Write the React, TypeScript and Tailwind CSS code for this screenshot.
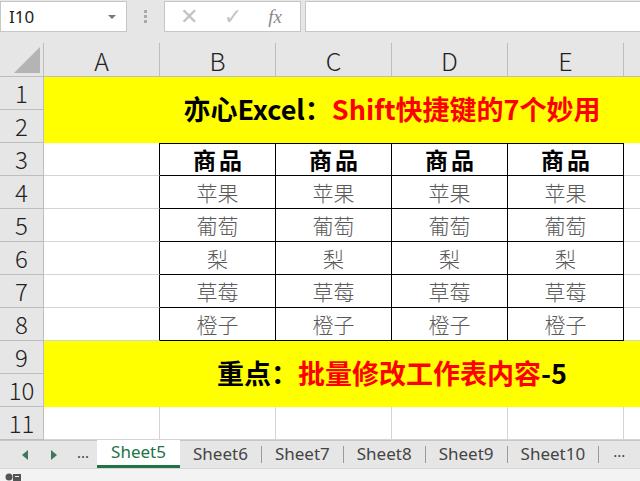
import React from "react";

const FONT = "font-['Noto_Sans_CJK_SC','Noto_Sans',sans-serif]";
const COLS = ["A", "B", "C", "D", "E", ""];
const FRUITS = ["苹果", "葡萄", "梨", "草莓", "橙子"];

function FormulaBar() {
  return (
    <div className="h-[43px] bg-[#e6e6e6] flex items-start pt-px">
      {/* 名称框 */}
      <div className="w-[127px] h-[31px] bg-white border border-[#c6c6c6] flex items-center justify-between pl-2 pr-2.5">
        <span className="text-[17px] text-[#222] font-['Noto_Sans',sans-serif]">I10</span>
        <span className="w-0 h-0 border-l-[4px] border-r-[4px] border-t-[4px] border-l-transparent border-r-transparent border-t-[#777]" />
      </div>
      <div className="w-[37px] h-[31px] flex flex-col items-center justify-center gap-[2px]">
        <span className="w-[3px] h-[3px] bg-[#aaa]" />
        <span className="w-[3px] h-[3px] bg-[#aaa]" />
        <span className="w-[3px] h-[3px] bg-[#aaa]" />
      </div>
      <div className="w-[137px] h-[31px] bg-white border border-[#c6c6c6] flex items-center">
        <span className="w-[48px] text-center text-[22px] leading-none text-[#c2c2c2] font-['DejaVu_Sans',sans-serif] font-light">✕</span>
        <span className="w-[40px] text-center text-[22px] leading-none text-[#c2c2c2] font-['DejaVu_Sans',sans-serif]">✓</span>
        <span className="w-[44px] text-center text-[19px] leading-none text-[#888] italic font-['Liberation_Serif',serif]">fx</span>
      </div>
      <div className="ml-[4px] flex-1 h-[31px] bg-white border border-[#c6c6c6] border-r-0" />
    </div>
  );
}

function ColumnHeader() {
  return (
    <div className="h-[34px] flex bg-[#e6e6e6] border-b border-[#bdbdbd]">
      <div className="w-[44px] shrink-0 border-r border-[#bdbdbd] flex items-end justify-end pr-[3px] pb-[3px]">
        <svg width="26" height="26">
          <polygon points="26,0 26,26 0,26" fill="#b4b4b4" />
        </svg>
      </div>
      {COLS.map((c, i) => (
        <div
          key={i}
          className="w-[116px] shrink-0 border-r border-[#bdbdbd] flex items-center justify-center text-[25px] font-light text-[#222] leading-none pt-[2px]"
        >
          {c}
        </div>
      ))}
    </div>
  );
}

function RowHead({ n, row }: { n: number; row: number }) {
  return (
    <div
      style={{ gridRowStart: row }}
      className="col-start-1 bg-[#e6e6e6] border-r border-b border-[#bdbdbd] flex items-center justify-center text-[24px] font-light text-[#222] leading-none"
    >
      {n}
    </div>
  );
}

export default function App() {
  const tabs = ["Sheet6", "Sheet7", "Sheet8", "Sheet9", "Sheet10"];

  return (
    <div className={`w-[640px] h-[481px] overflow-hidden bg-white flex flex-col ${FONT}`}>
      <FormulaBar />
      <ColumnHeader />

      <div className="grid grid-cols-[44px_repeat(6,116px)] grid-rows-[repeat(11,33px)] w-[740px]">
        {/* 1-2 行：标题 */}
        <RowHead n={1} row={1} />
        <RowHead n={2} row={2} />
        <div className="col-start-2 col-span-6 row-start-1 row-span-2 bg-[#ffff00] flex items-center justify-center pb-[4px] text-[27px] font-bold leading-none">
          <span className="text-black">亦心Excel：</span>
          <span className="text-[#ff0000]">Shift快捷键的7个妙用</span>
        </div>

        {/* 3-8 行：表格 */}
        {[3, 4, 5, 6, 7, 8].map((r, i) => (
          <React.Fragment key={r}>
            <RowHead n={r} row={r} />
            <div className="border-r border-r-black border-b border-b-[#d4d4d4]" style={{ gridRowStart: r }} />
            {[0, 1, 2, 3].map((c) => (
              <div
                key={c}
                style={{ gridRowStart: r }}
                className={
                  "border-r border-b border-black flex items-center justify-center leading-none " +
                  (i === 0
                    ? "border-t text-[23px] font-bold text-black tracking-[3px] pl-[3px]"
                    : "text-[21px] font-light text-[#5a5a5a]")
                }
              >
                {i === 0 ? "商品" : FRUITS[i - 1]}
              </div>
            ))}
            <div className="border-r border-b border-[#d4d4d4]" style={{ gridRowStart: r }} />
          </React.Fragment>
        ))}

        {/* 9-10 行：重点 */}
        <RowHead n={9} row={9} />
        <RowHead n={10} row={10} />
        <div className="col-start-2 col-span-6 row-start-9 row-span-2 bg-[#ffff00] flex items-center justify-center pb-[4px] text-[27px] font-bold leading-none">
          <span className="text-black">重点：</span>
          <span className="text-[#ff0000]">批量修改工作表内容</span>
          <span className="text-black">-5</span>
        </div>

        {/* 11 行 */}
        <RowHead n={11} row={11} />
        {[0, 1, 2, 3, 4, 5].map((c) => (
          <div key={c} className="row-start-11 border-r border-b border-[#d4d4d4]" />
        ))}
      </div>

      {/* 工作表标签 */}
      <div className="h-[28px] shrink-0 bg-[#e6e6e6] border-t border-[#c6c6c6] flex items-stretch font-['Noto_Sans',sans-serif]">
        <div className="w-[97px] flex items-center">
          <svg width="8" height="10" className="ml-[21px]" viewBox="0 0 8 10">
            <polygon points="7,0 7,10 1,5" fill="#3d7a5a" />
          </svg>
          <svg width="8" height="10" className="ml-[21px]" viewBox="0 0 8 10">
            <polygon points="1,0 1,10 7,5" fill="#3d7a5a" />
          </svg>
          <span className="ml-[19px] text-[15px] text-[#444] leading-none pb-[4px]">...</span>
        </div>
        <div className="w-[83px] bg-white border-b-[3px] border-[#217346] flex items-center justify-center text-[17px] text-[#217346] leading-none -mt-px pb-[2px]">
          Sheet5
        </div>
        {tabs.map((t) => (
          <div key={t} className="flex items-center">
            <span className="px-[13px] text-[17px] text-[#444] leading-none pb-[3px]">{t}</span>
            <span className="w-px h-[17px] bg-[#9a9a9a]" />
          </div>
        ))}
        <span className="ml-[14px] text-[15px] text-[#444] self-center leading-none pb-[6px]">...</span>
      </div>

      {/* 状态栏 */}
      <div className="flex-1 bg-[#f3f3f3] border-t border-[#d6d6d6] flex items-end pl-[5px]">
        <svg width="16" height="9" viewBox="0 0 16 9">
          <circle cx="4" cy="5" r="3.5" fill="#555" />
          <rect x="8" y="2" width="8" height="7" fill="#555" />
          <rect x="10" y="4" width="4" height="1" fill="#f3f3f3" />
        </svg>
      </div>
    </div>
  );
}
